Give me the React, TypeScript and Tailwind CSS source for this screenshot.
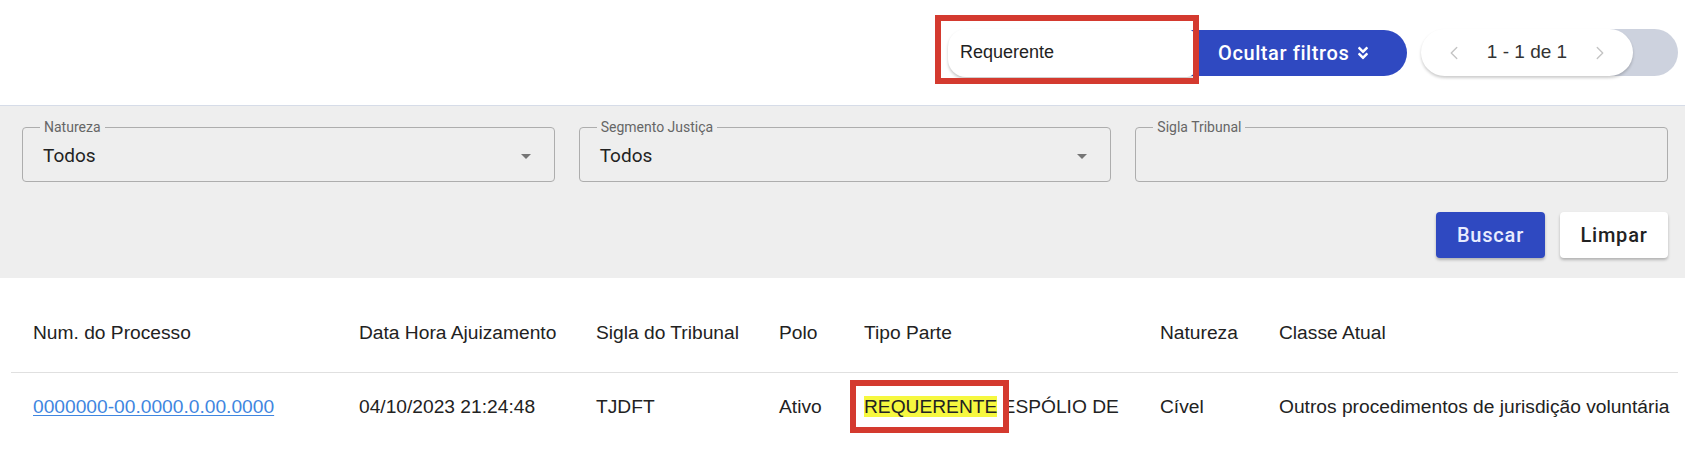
import { ChevronLeft, ChevronRight } from "lucide-react";
import { FaAngleDoubleDown } from "react-icons/fa";

const arial = { fontFamily: '"Liberation Sans", Arial, sans-serif' };

function DropArrow() {
  return (
    <svg width="24" height="24" viewBox="0 0 24 24" className="text-[#757575]">
      <path d="M7 10l5 5 5-5z" fill="currentColor" />
    </svg>
  );
}

function Field({ label, value, select }: { label: string; value?: string; select?: boolean }) {
  return (
    <div className="relative h-[55px] rounded-[4px] border border-[#adadad] flex items-center justify-between pl-[20px] pr-[16px] pt-[3px]">
      <span className="absolute -top-[9px] left-[17px] bg-[#eeeeee] px-[4px] text-[14px] leading-[16px] text-[#666666]">
        {label}
      </span>
      <span className="text-[19px] text-[#222222]">{value}</span>
      {select && <DropArrow />}
    </div>
  );
}

const cols = "grid grid-cols-[326px_237px_183px_85px_296px_119px_1fr] px-[22px]";

export default function App() {
  return (
    <div className="w-[1701px] h-[450px] bg-white overflow-hidden font-['Roboto',sans-serif]">
      {/* top bar */}
      <div className="h-[105px] flex items-center justify-end pr-[23px]">
        <div className="relative z-20">
          <div
            className="w-[247px] h-[48px] bg-white rounded-l-[18px] rounded-r-[8px] shadow-[0_2px_3px_rgba(0,0,0,0.22)] flex items-center pl-[12px] text-[18px] text-[#222222]"
            style={arial}
          >
            Requerente
          </div>
          <div className="absolute -left-[13px] -right-[4px] -top-[14px] -bottom-[7px] border-[6px] border-[#d43a2f]" />
        </div>
        <button className="-ml-[28px] w-[240px] h-[46px] rounded-full bg-[#2f49c1] text-white flex items-center pl-[51px] gap-[7px] text-[20px] font-medium tracking-[0.03em]">
          Ocultar filtros
          <FaAngleDoubleDown className="w-[14px] h-[16px]" />
        </button>
        <div className="ml-[14px] flex items-center">
          <div
            className="relative z-10 w-[212px] h-[47px] rounded-full bg-white shadow-[0_2px_3px_rgba(0,0,0,0.2)] flex items-center justify-between px-[22px] text-[19px] text-[#333333]"
            style={arial}
          >
            <ChevronLeft className="w-[22px] h-[22px] text-[#c4c4c4]" strokeWidth={1.5} />
            <span>1 - 1 de 1</span>
            <ChevronRight className="w-[22px] h-[22px] text-[#c4c4c4]" strokeWidth={1.5} />
          </div>
          <div className="-ml-[45px] w-[90px] h-[47px] rounded-r-full bg-[#cdd2de]" />
        </div>
      </div>

      {/* filters */}
      <div className="mr-[16px] bg-[#eeeeee] border-t border-[#d6dce8] pt-[21px] pb-[20px] pl-[22px] pr-[17px]">
        <div className="grid grid-cols-3 gap-[24px]">
          <Field label="Natureza" value="Todos" select />
          <Field label="Segmento Justiça" value="Todos" select />
          <Field label="Sigla Tribunal" />
        </div>
        <div className="mt-[30px] flex justify-end gap-[15px]">
          <button className="w-[109px] h-[46px] rounded-[4px] bg-[#2f49c1] text-[#e8ecff] text-[20px] font-medium tracking-[0.04em] shadow-[0_2px_3px_rgba(0,0,0,0.25)]">
            Buscar
          </button>
          <button className="w-[108px] h-[46px] rounded-[4px] bg-white text-[#222222] text-[20px] font-medium tracking-[0.04em] shadow-[0_2px_3px_rgba(0,0,0,0.25)]">
            Limpar
          </button>
        </div>
      </div>

      {/* table */}
      <div className="mx-[11px] w-[1667px] mt-[17px] text-[19.2px] text-[#222222]" style={arial}>
        <div className={`${cols} h-[78px] items-center border-b border-[#e0e0e0]`}>
          <span>Num. do Processo</span>
          <span>Data Hora Ajuizamento</span>
          <span>Sigla do Tribunal</span>
          <span>Polo</span>
          <span>Tipo Parte</span>
          <span>Natureza</span>
          <span>Classe Atual</span>
        </div>
        <div className={`${cols} h-[68px] items-center`}>
          <a href="#" className="text-[#3f86e0] underline underline-offset-2">
            0000000-00.0000.0.00.0000
          </a>
          <span>04/10/2023 21:24:48</span>
          <span>TJDFT</span>
          <span>Ativo</span>
          <span className="relative whitespace-nowrap">
            <span className="bg-[#f6f83f]">REQUERENTE</span> ESPÓLIO DE
            <span className="absolute -left-[14px] w-[159px] -top-[13px] -bottom-[12px] border-[6px] border-[#d43a2f]" />
          </span>
          <span>Cível</span>
          <span className="whitespace-nowrap">Outros procedimentos de jurisdição voluntária</span>
        </div>
      </div>
    </div>
  );
}
